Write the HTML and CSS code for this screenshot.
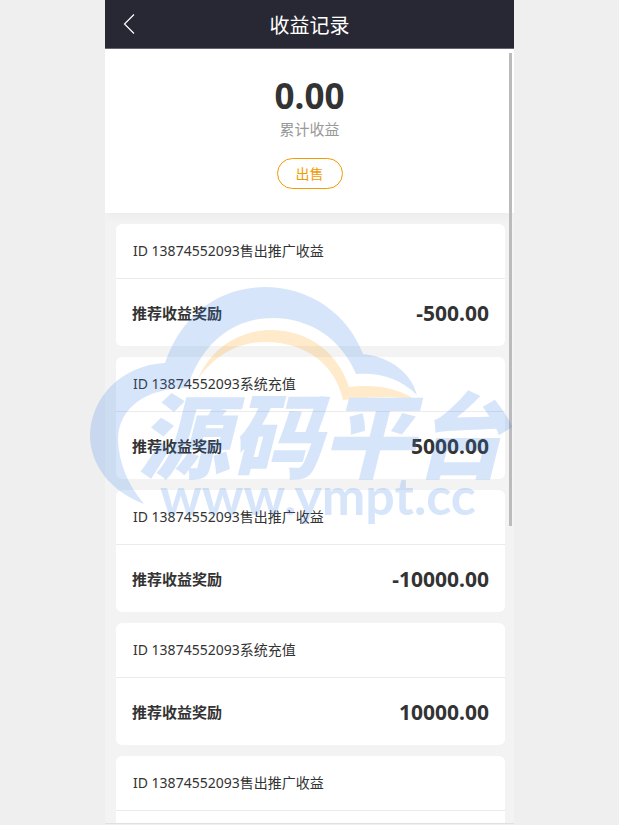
FILE: index.html
```
<!DOCTYPE html>
<html lang="zh-CN">
<head>
    <meta charset="UTF-8">
    <meta name="viewport" content="width=device-width, initial-scale=1.0">
    <title>收益记录</title>
    <link rel="stylesheet" href="styles.css">
</head>
<body>
    <div class="page">
        <header class="topbar">
            <a class="back" href="#" aria-label="返回">
                <svg width="12" height="22" viewBox="0 0 12 22">
                    <path d="M11 1.500L1.500 11L11 20.500" fill="none" stroke="#fff" stroke-width="1.200"/>
                </svg>
            </a>
            <h1>收益记录</h1>
        </header>

        <main class="content">
            <section class="summary">
                <div class="total">0.00</div>
                <div class="total-label">累计收益</div>
                <button type="button" class="sell">出售</button>
            </section>

            <section class="records">
                <article class="record">
                    <div class="record-title">ID 13874552093售出推广收益</div>
                    <div class="record-body">
                        <span class="record-type">推荐收益奖励</span>
                        <span class="amount">-500.00</span>
                    </div>
                </article>
                <article class="record">
                    <div class="record-title">ID 13874552093系统充值</div>
                    <div class="record-body">
                        <span class="record-type">推荐收益奖励</span>
                        <span class="amount">5000.00</span>
                    </div>
                </article>
                <article class="record">
                    <div class="record-title">ID 13874552093售出推广收益</div>
                    <div class="record-body">
                        <span class="record-type">推荐收益奖励</span>
                        <span class="amount">-10000.00</span>
                    </div>
                </article>
                <article class="record">
                    <div class="record-title">ID 13874552093系统充值</div>
                    <div class="record-body">
                        <span class="record-type">推荐收益奖励</span>
                        <span class="amount">10000.00</span>
                    </div>
                </article>
                <article class="record">
                    <div class="record-title">ID 13874552093售出推广收益</div>
                    <div class="record-body"></div>
                </article>
            </section>
        </main>

        <div class="scroll-thumb"></div>

        <!-- site watermark -->
        <svg class="watermark" width="440" height="250" viewBox="85 280 440 250">
            <path fill="#3782eb" d="M144 504C112 492 90 466 90 435C91 397 122 365 165 363C181 316 217 288 264 287C310 287 348 314 363 354C391 357 411 373 417 395C401 379 380 372 356 374C342 340 311 318 273 318C231 318 201 345 187 388C146 388 118 408 118 440C119 465 129 486 144 504Z"/>
            <path fill="#ff9b00" d="M198 379C211 348 239 330 272 330C310 331 338 353 349 387C375 384 397 388 414 399C391 396 367 397 343 400C336 366 307 342 265 342C238 342 215 355 198 379Z"/>
            <text class="mark-name" x="138" y="471">源码平台</text>
            <text class="mark-url" x="160" y="515">www.ympt.cc</text>
        </svg>
    </div>
</body>
</html>
```
FILE: styles.css
```
* {
    box-sizing: border-box;
}

body {
    margin: 0;
    background-color: #efefef;
    color: #333;
    font-family: "Noto Sans", "Noto Sans CJK SC", sans-serif;
    font-size: 14px;
}

.page {
    position: relative;
    display: flex;
    flex-direction: column;
    width: 100%;
    max-width: 409px;
    height: calc(100vh - 1px);
    margin: 0 auto;
    background-color: #f3f3f3;
    border-bottom: 1px solid #e0e0e0;
}

.topbar {
    display: grid;
    grid-template-columns: 48px 1fr 48px;
    align-items: center;
    flex: none;
    height: 49px;
    background-color: #282834;
    border-bottom: 1px solid #6b6375;
}

.topbar h1 {
    margin: 0;
    padding-top: 4px;
    color: #fff;
    font-size: 20px;
    font-weight: normal;
    line-height: 44px;
    text-align: center;
}

.back {
    display: flex;
    padding-left: 18px;
}

.content {
    flex: 1;
    min-height: 0;
    overflow: hidden;
}

.summary {
    display: flex;
    flex-direction: column;
    align-items: center;
    padding: 24px 0;
    background-color: #fff;
    box-shadow: 0 4px 10px rgba(0, 0, 0, 0.03);
}

.total {
    font-size: 35px;
    font-weight: bold;
    line-height: 46px;
}

.total-label {
    color: #999;
    font-size: 15px;
    line-height: 20px;
}

.sell {
    height: 31px;
    margin-top: 19px;
    padding: 0 18px 2px;
    color: #f29b00;
    background-color: #fff;
    border: 1px solid #f29b00;
    border-radius: 16px;
    font-family: inherit;
    font-size: 14px;
}

.records {
    display: flex;
    flex-direction: column;
    gap: 11px;
    padding: 11px 9px 10px 11px;
}

.record {
    background-color: #fff;
    border-radius: 6px;
}

.record-title {
    padding: 0 17px;
    border-bottom: 1px solid #ebebeb;
    line-height: 54px;
}

.record-body {
    display: flex;
    align-items: center;
    justify-content: space-between;
    height: 67px;
    padding: 0 16px;
}

.record-type {
    font-size: 15px;
    font-weight: bold;
}

.amount {
    font-size: 21px;
    font-weight: bold;
}

.scroll-thumb {
    position: absolute;
    top: 53px;
    right: 2px;
    width: 3px;
    height: 473px;
    background-color: #bbb;
}

.watermark {
    position: absolute;
    top: 280px;
    left: -20px;
    opacity: 0.2;
    pointer-events: none;
}

.watermark text {
    fill: #3782eb;
}

.mark-name {
    font-family: "Noto Sans CJK SC", sans-serif;
    font-size: 92px;
    font-style: italic;
    font-weight: 900;
}

.mark-url {
    font-family: Lato, sans-serif;
    font-size: 52px;
    font-weight: bold;
}
```
